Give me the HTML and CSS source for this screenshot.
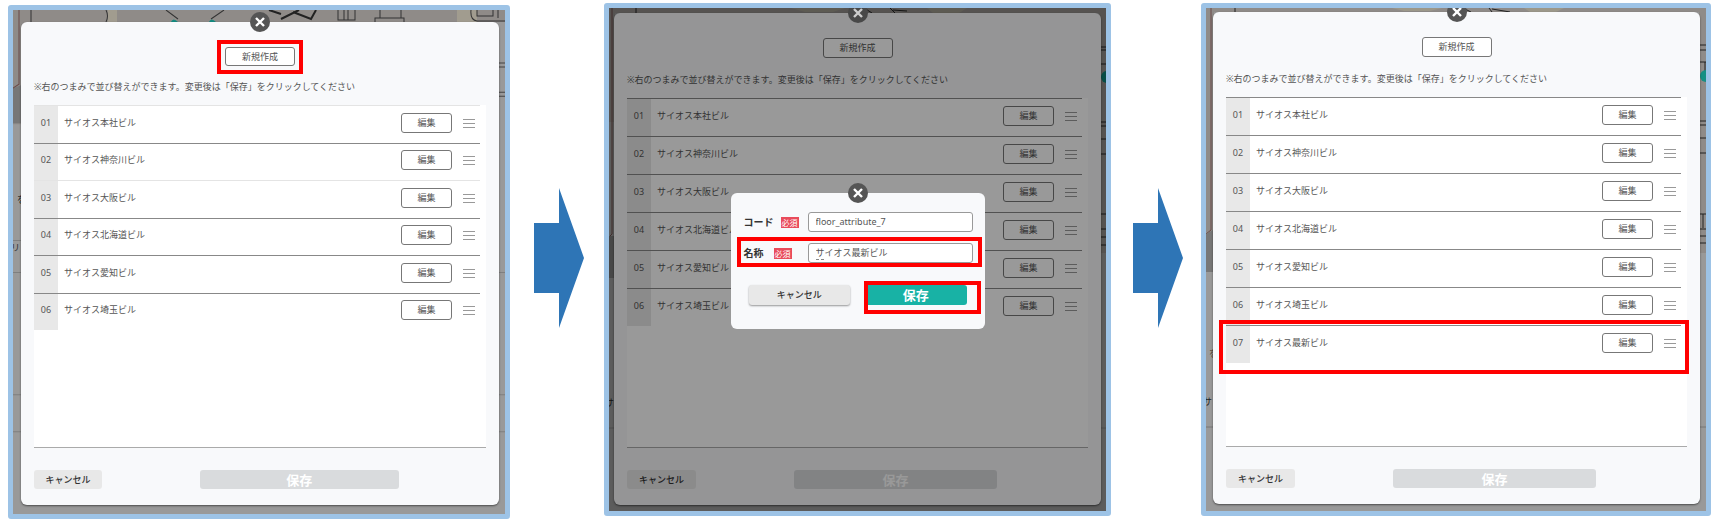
FILE: index.html
```html
<!DOCTYPE html>
<html lang="ja">
<head>
<meta charset="utf-8">
<title>ビルの新規作成手順</title>
<link rel="stylesheet" href="styles.css">
</head>
<body>
<svg class="defs" aria-hidden="true">
  <symbol id="x" viewBox="0 0 20 20"><path d="M6 6l8 8M14 6l-8 8" fill="none" stroke="currentColor" stroke-width="2.4"/></symbol>
  <symbol id="grip" viewBox="0 0 12 10"><path d="M0 1.5h12M0 5.5h12M0 9.5h12" fill="none" stroke="currentColor"/></symbol>
  <symbol id="arrow" viewBox="0 0 50 140"><path d="M0 35h25V0l25 70-25 70v-35H0z" fill="#2e75b6"/></symbol>
</svg>
<main class="steps">

  <section class="frame frame-first">
    <svg class="plan" viewBox="0 0 492 503" preserveAspectRatio="none" aria-hidden="true">
      <path d="M0 0h20v114H0zM20 0h472v12H20z" fill="#8f8b88"/>
      <path d="M95 0h9v12h-9zM444 0h20v12h-20z" fill="#a19c8f"/>
      <path d="M0 78l8-3v38H0z" fill="#777"/>
      <path d="M6 0v74L0 78" fill="none" stroke="#6b4a48"/>
      <path d="M18 0v12M93 0q3 6 0 12M153 0l12 9M211 0l-13 9M325 0v10h17V0M331 0v10M335 0v10M362 12V8h29v4M367 8V0M388 8V0M458 0q-1 10 6 11h28M464 0v6h16V0M485 0v8" fill="none" stroke="#333"/>
      <path d="M256 0l12 4M268 9l18-9M280 2l18 7 5-9" fill="none" stroke="#222" stroke-width="2"/>
      <path d="M158 12q2-5 7 0zM196 12q2-5 7 0z" fill="#148a80"/>
      <path d="M484 53h8M484 57h8M484 82h8M484 86h8" stroke="#444"/>
      <path d="M0 230h8M0 262h8M0 384h8M0 421h8M486 384h6M486 421h6M486 262h6" stroke="#7f7f7f"/>
      <text x="4" y="193" font-size="9" fill="#222">を</text>
      <text x="-2" y="241" font-size="9" fill="#333">リ</text>
    </svg>
    <div class="modal">
      <button class="close" type="button" aria-label="閉じる"><svg><use href="#x"/></svg></button>
      <span class="create marked"><button class="btn" type="button">新規作成</button></span>
      <p class="note">※右のつまみで並び替えができます。変更後は「保存」をクリックしてください</p>
      <div class="list">
        <ul class="rows">
          <li class="row"><span class="num">01</span><span class="name">サイオス本社ビル</span><button class="btn edit" type="button">編集</button><svg class="grip"><use href="#grip"/></svg></li>
          <li class="row"><span class="num">02</span><span class="name">サイオス神奈川ビル</span><button class="btn edit" type="button">編集</button><svg class="grip"><use href="#grip"/></svg></li>
          <li class="row row-faint"><span class="num">03</span><span class="name">サイオス大阪ビル</span><button class="btn edit" type="button">編集</button><svg class="grip"><use href="#grip"/></svg></li>
          <li class="row"><span class="num">04</span><span class="name">サイオス北海道ビル</span><button class="btn edit" type="button">編集</button><svg class="grip"><use href="#grip"/></svg></li>
          <li class="row"><span class="num">05</span><span class="name">サイオス愛知ビル</span><button class="btn edit" type="button">編集</button><svg class="grip"><use href="#grip"/></svg></li>
          <li class="row"><span class="num">06</span><span class="name">サイオス埼玉ビル</span><button class="btn edit" type="button">編集</button><svg class="grip"><use href="#grip"/></svg></li>
        </ul>
      </div>
      <footer class="actions"><button class="cancel" type="button">キャンセル</button><button class="save" type="button" disabled>保存</button></footer>
    </div>
  </section>

  <svg class="arrow" role="img" aria-label="次へ"><use href="#arrow"/></svg>

  <section class="frame frame-second">
    <svg class="plan" viewBox="0 0 497 503" preserveAspectRatio="none" aria-hidden="true">
      <path d="M0 0h497v5H0zM0 0h6v114H0zM490 0h7v245h-7z" fill="#8f8b88"/>
      <path d="M182 0h54l-12 4h-28zM318 0h40l-8 5h-26z" fill="#9c988a"/>
      <path d="M3 0v226l-3 3" fill="none" stroke="#6b4a48"/>
      <path d="M27 0v5M255 0l8 5M281 0l5 5M284 2l14 1M492 39h5M492 42h5M492 56h5M492 114h5M492 118h5M492 131h5M492 146h5M492 206h5M492 221h5M492 229h5M492 237h5" fill="none" stroke="#222"/>
      <path d="M0 228h6v42H0z" fill="#777"/>
      <circle cx="498" cy="69" r="6" fill="#0e8177"/>
      <path d="M0 420h6M491 420h6" stroke="#7f7f7f"/>
      <text x="-4" y="398" font-size="9" fill="#222">サ</text>
    </svg>
    <div class="modal">
      <button class="close close-dim" type="button" aria-label="閉じる"><svg><use href="#x"/></svg></button>
      <span class="create"><button class="btn" type="button">新規作成</button></span>
      <p class="note">※右のつまみで並び替えができます。変更後は「保存」をクリックしてください</p>
      <div class="list">
        <ul class="rows">
          <li class="row"><span class="num">01</span><span class="name">サイオス本社ビル</span><button class="btn edit" type="button">編集</button><svg class="grip"><use href="#grip"/></svg></li>
          <li class="row"><span class="num">02</span><span class="name">サイオス神奈川ビル</span><button class="btn edit" type="button">編集</button><svg class="grip"><use href="#grip"/></svg></li>
          <li class="row"><span class="num">03</span><span class="name">サイオス大阪ビル</span><button class="btn edit" type="button">編集</button><svg class="grip"><use href="#grip"/></svg></li>
          <li class="row"><span class="num">04</span><span class="name">サイオス北海道ビル</span><button class="btn edit" type="button">編集</button><svg class="grip"><use href="#grip"/></svg></li>
          <li class="row"><span class="num">05</span><span class="name">サイオス愛知ビル</span><button class="btn edit" type="button">編集</button><svg class="grip"><use href="#grip"/></svg></li>
          <li class="row"><span class="num">06</span><span class="name">サイオス埼玉ビル</span><button class="btn edit" type="button">編集</button><svg class="grip"><use href="#grip"/></svg></li>
        </ul>
      </div>
      <footer class="actions"><button class="cancel" type="button">キャンセル</button><button class="save" type="button" disabled>保存</button></footer>
    </div>
    <div class="shade"></div>
    <form class="dialog">
      <button class="close" type="button" aria-label="閉じる"><svg><use href="#x"/></svg></button>
      <div class="field">
        <label for="code">コード</label><span class="required">必須</span>
        <input id="code" type="text" value="floor_attribute_7">
      </div>
      <div class="field marked">
        <label for="name">名称</label><span class="required">必須</span>
        <input id="name" type="text" value="サイオス最新ビル"><i class="typing"></i>
      </div>
      <div class="dialog-actions">
        <button class="cancel" type="button">キャンセル</button>
        <span class="submit marked"><button class="save" type="button">保存</button></span>
      </div>
    </form>
  </section>

  <svg class="arrow" role="img" aria-label="次へ"><use href="#arrow"/></svg>

  <section class="frame frame-third">
    <svg class="plan" viewBox="0 0 500 503" preserveAspectRatio="none" aria-hidden="true">
      <path d="M0 0h500v4H0zM0 0h8v225H0zM493 0h7v245h-7z" fill="#8f8b88"/>
      <path d="M186 0h50l-12 3h-26zM318 0h40l-8 4h-26z" fill="#9c988a"/>
      <path d="M5 0v222l-5 4" fill="none" stroke="#6b4a48"/>
      <path d="M29 0v4M257 0l8 4M283 0l3 4M286 1l18 3M494 37h6M494 42h6M494 54h6M499 54v10M494 113h6M494 117h6M494 130h6M494 145h6M494 206h6M497 206v14M494 221h6M494 228h6M494 235h6" fill="none" stroke="#222"/>
      <path d="M0 226l7-4v42H0z" fill="#777"/>
      <circle cx="500" cy="68" r="6" fill="#168f84"/>
      <path d="M0 419h7M494 419h6" stroke="#777"/>
      <text x="3" y="349" font-size="9" fill="#543">を</text>
      <text x="-3" y="397" font-size="9" fill="#222">サ</text>
    </svg>
    <div class="modal">
      <button class="close" type="button" aria-label="閉じる"><svg><use href="#x"/></svg></button>
      <span class="create"><button class="btn" type="button">新規作成</button></span>
      <p class="note">※右のつまみで並び替えができます。変更後は「保存」をクリックしてください</p>
      <div class="list">
        <ul class="rows">
          <li class="row"><span class="num">01</span><span class="name">サイオス本社ビル</span><button class="btn edit" type="button">編集</button><svg class="grip"><use href="#grip"/></svg></li>
          <li class="row"><span class="num">02</span><span class="name">サイオス神奈川ビル</span><button class="btn edit" type="button">編集</button><svg class="grip"><use href="#grip"/></svg></li>
          <li class="row"><span class="num">03</span><span class="name">サイオス大阪ビル</span><button class="btn edit" type="button">編集</button><svg class="grip"><use href="#grip"/></svg></li>
          <li class="row"><span class="num">04</span><span class="name">サイオス北海道ビル</span><button class="btn edit" type="button">編集</button><svg class="grip"><use href="#grip"/></svg></li>
          <li class="row"><span class="num">05</span><span class="name">サイオス愛知ビル</span><button class="btn edit" type="button">編集</button><svg class="grip"><use href="#grip"/></svg></li>
          <li class="row"><span class="num">06</span><span class="name">サイオス埼玉ビル</span><button class="btn edit" type="button">編集</button><svg class="grip"><use href="#grip"/></svg></li>
          <li class="row marked"><span class="num">07</span><span class="name">サイオス最新ビル</span><button class="btn edit" type="button">編集</button><svg class="grip"><use href="#grip"/></svg></li>
        </ul>
      </div>
      <footer class="actions"><button class="cancel" type="button">キャンセル</button><button class="save" type="button" disabled>保存</button></footer>
    </div>
  </section>

</main>
</body>
</html>
```

FILE: styles.css
```css
* { box-sizing: border-box; }

body {
  margin: 0;
  background: #fff;
  color: #555;
  font: 9px/14px "Noto Sans", "Noto Sans CJK JP", sans-serif;
}

button, input { font: inherit; color: inherit; margin: 0; padding: 0; }

.defs { position: absolute; width: 0; height: 0; }

.steps {
  display: grid;
  grid-template-columns: 502fr 94px 507fr 90px 510fr;
  align-items: start;
  padding: 3px 4px 4px 8px;
}

.arrow {
  width: 50px;
  height: 140px;
  margin: 0 0 6px 3px;
  align-self: center;
  justify-self: center;
}

/* framed screens */
.frame {
  position: relative;
  overflow: hidden;
  border: 5px solid #9dc3e6;
  border-radius: 3px;
  background: #999;
}
.frame-first { margin-top: 2px; padding: 12px 6px 9px 8px; }
.frame-second { padding: 5px 5px 6px; }
.frame-third { padding: 4px 6px 7px 7px; }

.plan { position: absolute; inset: 0; width: 100%; height: 100%; }

.modal {
  position: relative;
  display: flex;
  flex-direction: column;
  padding: 25px 13px 16px;
  border-radius: 6px;
  background: #f8f9fb;
  box-shadow: 0 1px 2px rgba(0, 0, 0, .5);
}

.close {
  position: absolute;
  top: -10px;
  left: 50%;
  width: 20px;
  height: 20px;
  margin-left: -10px;
  border: 0;
  border-radius: 50%;
  background: #555;
  color: #fff;
}
.close svg { display: block; width: 20px; height: 20px; }
.close-dim { z-index: 2; background: #484848; color: #ccc; }

.btn {
  display: block;
  height: 20px;
  border: 1px solid #777;
  border-radius: 3px;
  background: #fff;
  line-height: 16px;
}

.create { align-self: center; }
.create .btn { width: 70px; }
.frame-first .create .btn { height: 19px; }

.note { margin: 15px 0 11px; white-space: nowrap; }
.frame-first .note { margin: 14px 0 11px; }

.list {
  min-height: 350px;
  padding-right: 6px;
  border-bottom: 1px solid #aaa;
  background: #fff;
}
.frame-first .list { min-height: 343px; }

.rows {
  display: grid;
  grid-auto-rows: 38px;
  margin: 0;
  padding: 0;
  list-style: none;
}
.frame-first .rows { grid-auto-rows: 1fr; min-height: 225px; }

.row {
  display: flex;
  align-items: center;
  padding-right: 5px;
  border-top: 1px solid #888;
}
.frame-first .row:first-child, .row-faint { border-color: #e4e4e4; }

.num {
  align-self: stretch;
  display: grid;
  place-items: center;
  width: 24px;
  padding-bottom: 3px;
  background: #e8e8e8;
}
.name { flex: 1; padding: 0 0 3px 6px; }
.edit { width: 51px; margin-bottom: 3px; line-height: 18px; }
.grip { width: 12px; height: 10px; margin: 0 0 3px 11px; color: #999; }

.actions { display: flex; margin-top: 22px; }

.cancel {
  height: 19px;
  border: 0;
  border-radius: 3px;
  background: #e8e8e8;
  color: #333;
  font-weight: 500;
}
.save {
  height: 19px;
  border: 0;
  border-radius: 3px;
  background: #d9dbdd;
  color: #fff;
  font-size: 13px;
  font-weight: 700;
  line-height: 14px;
}
.actions .cancel { width: 15%; }
.actions .save { width: 44%; margin-left: 98px; }

.shade { position: absolute; inset: 0; background: rgba(0, 0, 0, .4); }

/* red call-outs */
.marked { position: relative; }
.marked::after {
  content: "";
  position: absolute;
  inset: -7px -8px -8px;
  border: 4px solid #f00;
  pointer-events: none;
}
.row.marked::after { inset: -6px -8px -11px -7px; }
.field.marked::after { inset: -6px -9px -4px -7px; }
.submit.marked::after { inset: -4px -14px -9px -1px; }

/* edit dialog */
.dialog {
  position: absolute;
  z-index: 3;
  top: 185px;
  left: 50%;
  width: 254px;
  margin-left: -127px;
  padding: 19px 12px 24px 13px;
  border-radius: 6px;
  background: #f8f9fb;
}

.field { display: flex; align-items: center; gap: 7px; height: 20px; }
.field + .field { margin-top: 11px; }
.field label { min-width: 23px; color: #333; font-size: 10px; font-weight: 700; }
.field input {
  width: 165px;
  height: 20px;
  margin-left: auto;
  padding: 0 7px 2px;
  border: 1px solid #999;
  border-radius: 3px;
  background: #fff;
}
.required {
  padding: 0 1px;
  background: #e94b5b;
  color: #fff;
  font-size: 8px;
  line-height: 11px;
}
.typing {
  position: absolute;
  right: 149px;
  bottom: 3px;
  width: 8px;
  border-bottom: 1px dashed #888;
}

.dialog-actions { display: flex; gap: 15px; margin: 22px 6px 0 5px; }
.dialog-actions .cancel { flex: 1; height: 20px; box-shadow: 0 1px 2px rgba(0, 0, 0, .4); }
.submit { flex: 1; }
.submit .save { display: block; width: 100%; height: 20px; background: #18b2a5; }
```
